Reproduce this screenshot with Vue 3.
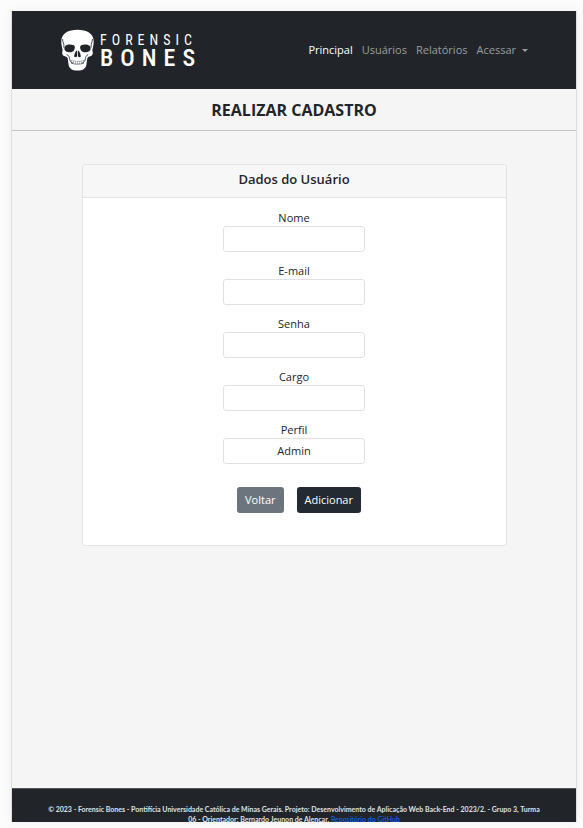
<script setup>
import { ref } from 'vue'

const links = ['Principal', 'Usuários', 'Relatórios']
const fields = ref([
  { id: 'nome', label: 'Nome', type: 'text', value: '' },
  { id: 'email', label: 'E-mail', type: 'email', value: '' },
  { id: 'senha', label: 'Senha', type: 'password', value: '' },
  { id: 'cargo', label: 'Cargo', type: 'text', value: '' },
])
const perfil = ref('Admin')
</script>

<template>
  <div class="page">
    <div class="frame">
      <header class="topbar">
        <a class="brand" href="#">
          <svg class="skull" viewBox="0 0 34 42" aria-hidden="true">
            <path fill="#fff" d="M17 .8C8 .8.8 4.600.8 12.200c0 4 .9 6.400 1.300 8.600.2 1.200-.6 2.200-.4 3.600.2 1.600 1.400 2.600 3.200 3 1.400.3 2 .8 2.300 2.200l.9 6.200c.3 2.200 1.500 3.500 3.200 4.600 1.200.8 2.800 1.100 5.700 1.100s4.500-.3 5.700-1.100c1.700-1.100 2.900-2.400 3.200-4.600l.9-6.200c.3-1.400.9-1.900 2.300-2.200 1.800-.4 3-1.400 3.200-3 .2-1.400-.6-2.400-.4-3.600.4-2.200 1.300-4.600 1.300-8.600C33.200 4.600 26 .8 17 .8z" />
            <path fill="#212529" d="M5 16.800c2.200-1.600 6-1.500 8.300-.5 1.300.6 1.400 2.700.5 4.400-1 2-3.200 2.700-5.700 2.500-2.700-.2-4.200-1.500-4.200-3.400 0-1.300.3-2.400 1.100-3zM29 16.800c-2.200-1.600-6-1.500-8.300-.5-1.300.6-1.400 2.700-.5 4.400 1 2 3.200 2.700 5.700 2.500 2.700-.2 4.200-1.500 4.200-3.400 0-1.300-.3-2.400-1.100-3zM16.600 21.600c-1.700.5-2.800 3.900-2.900 5.900.6 1.200 2 1 2.900-.2zM17.400 21.600c1.700.5 2.800 3.900 2.900 5.900-.6 1.200-2 1-2.900-.2z" />
            <path fill="none" stroke="#212529" stroke-width=".8" d="M2 10c.1 3.500 1.800 4 1.400 8.600M32 10c-.1 3.500-1.800 4-1.400 8.600M6.200 25.500c2 .8 2.500 2 2.800 4 .3 2.500 1.500 4 3.400 4.500M27.800 25.500c-2 .8-2.500 2-2.800 4-.3 2.500-1.500 4-3.400 4.500" />
            <path fill="none" stroke="#212529" stroke-width=".3" d="M10 31.200c4 1.600 10 1.600 14 0M11 31.500v2.500M13 31.900v2.600M15 32.200v2.600M17 32.300v2.700M19 32.200v2.600M21 31.900v2.600M23 31.500v2.500" />
            <path fill="none" stroke="#212529" stroke-width=".6" d="M10.500 34c3.800 1.600 9.200 1.600 13 0" />
          </svg>
          <span class="wordmark">
            <span class="word-small">FORENSIC</span>
            <span class="word-large">BONES</span>
          </span>
        </a>
        <nav class="nav">
          <a v-for="(link, i) in links" :key="link" href="#" :class="{ active: i === 0 }">{{ link }}</a>
          <a href="#" class="dropdown">Acessar</a>
        </nav>
      </header>

      <div class="title-bar">
        <h1>REALIZAR CADASTRO</h1>
      </div>

      <main class="content">
        <section class="card">
          <h2>Dados do Usuário</h2>
          <form class="form" @submit.prevent>
            <div v-for="field in fields" :key="field.id" class="field">
              <label :for="field.id">{{ field.label }}</label>
              <input :id="field.id" v-model="field.value" :type="field.type" />
            </div>
            <div class="field">
              <label for="perfil">Perfil</label>
              <select id="perfil" v-model="perfil">
                <option>Admin</option>
              </select>
            </div>
            <div class="actions">
              <button type="button" class="secondary">Voltar</button>
              <button type="submit">Adicionar</button>
            </div>
          </form>
        </section>
      </main>

      <footer class="footer">
        © 2023 - Forensic Bones - Pontifícia Universidade Católica de Minas Gerais. Projeto: Desenvolvimento de Aplicação Web Back-End - 2023/2. - Grupo 3, Turma 06 - Orientador: Bernardo Jeunon de Alencar. <a href="#">Repositório do GitHub</a>
      </footer>
    </div>
  </div>
</template>

<style>
body {
  margin: 0;
  background: #fcfcfc;
}
</style>

<style scoped>
* {
  box-sizing: border-box;
}
.page {
  display: flex;
  height: 100vh;
  min-height: 680px;
  padding: 11px 6px 6px 11px;
  font-family: "Open Sans", "Noto Sans", sans-serif;
  font-size: 11px;
  line-height: 16px;
  color: #212529;
}
.frame {
  flex: 1;
  display: flex;
  flex-direction: column;
  overflow: hidden;
  background: #f5f5f5;
  border: solid #dedede;
  border-width: 0 1px;
  box-shadow: 0 0 12px rgba(0, 0, 0, 0.06);
}
.topbar {
  display: flex;
  align-items: center;
  justify-content: space-between;
  height: 78px;
  flex-shrink: 0;
  padding: 0 48px;
  background: #212529;
}
.brand {
  display: flex;
  align-items: center;
  gap: 5px;
  color: #fff;
  text-decoration: none;
}
.skull {
  width: 35px;
  height: 42px;
}
.wordmark {
  display: flex;
  flex-direction: column;
  padding-top: 2px;
  font-family: "Roboto Condensed", Roboto, sans-serif;
}
.word-small {
  font-size: 14px;
  line-height: 15px;
  letter-spacing: 5px;
}
.word-large {
  font-size: 24px;
  line-height: 21px;
  font-weight: 500;
  letter-spacing: 7px;
}
.nav {
  display: flex;
  gap: 9px;
}
.nav a {
  color: #9b9d9f;
  text-decoration: none;
}
.nav .active {
  color: #fff;
}
.dropdown {
  display: flex;
  align-items: center;
  gap: 6px;
}
.dropdown::after {
  content: "";
  border: 3px solid transparent;
  border-top-color: currentColor;
  border-bottom: 0;
}
.title-bar {
  flex-shrink: 0;
  padding: 11px 0 10px;
  border-bottom: 1px solid #c4c4c4;
  text-align: center;
}
h1 {
  margin: 0;
  font-size: 16px;
  line-height: 20px;
  font-weight: 700;
}
.content {
  flex: 1 0 auto;
  padding: 33px 0;
}
.card {
  box-sizing: content-box;
  width: 75%;
  margin: 0 auto;
  background: #fff;
  border: 1px solid #e4e4e4;
  border-radius: 3px;
}
h2 {
  margin: 0;
  padding: 4px 0 8px;
  background: #f7f7f7;
  border-bottom: 1px solid #e4e4e4;
  border-radius: 3px 3px 0 0;
  font-size: 13px;
  line-height: 20px;
  font-weight: 600;
  text-align: center;
}
.form {
  display: flex;
  flex-direction: column;
  align-items: center;
  gap: 11px;
  padding: 12px 0 32px;
}
.field {
  display: flex;
  flex-direction: column;
  width: 142px;
  text-align: center;
}
input,
select {
  appearance: none;
  width: 100%;
  height: 26px;
  padding: 0 8px;
  border: 1px solid #dfe2e5;
  border-radius: 3px;
  background: #fff;
  color: #212529;
  font: inherit;
  text-align: center;
  text-align-last: center;
}
.actions {
  display: flex;
  gap: 13px;
  padding: 12px 0 0 10px;
}
button {
  height: 26px;
  padding: 0 8px;
  border: 0;
  border-radius: 3px;
  background: #232a32;
  color: #fff;
  font: inherit;
}
.secondary {
  background: #6c757d;
}
.footer {
  flex-shrink: 0;
  height: 34px;
  overflow: hidden;
  padding: 15px 32px 0;
  background: #212529;
  border-top: 1px solid #55585b;
  color: #dee2e6;
  font-family: Lato, "Open Sans", sans-serif;
  font-size: 7px;
  line-height: 10px;
  font-weight: 700;
  text-align: center;
}
.footer a {
  color: #0d6efd;
  font-weight: 400;
}
</style>
